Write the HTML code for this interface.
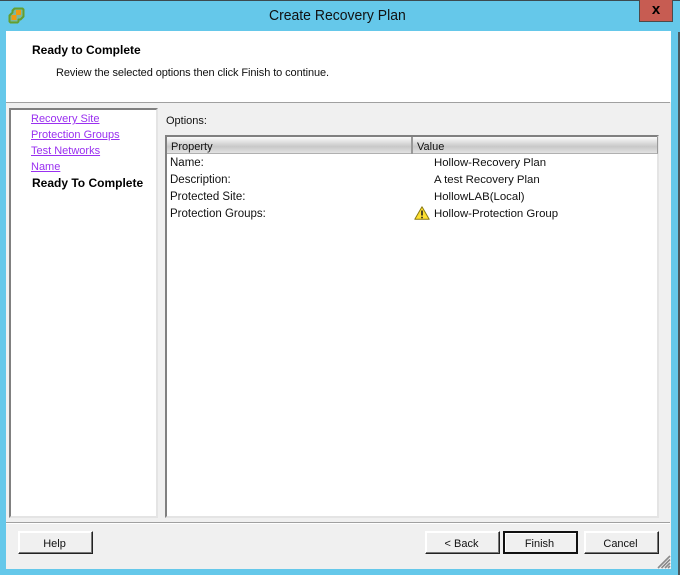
<!DOCTYPE html>
<html><head><meta charset="utf-8">
<style>
html,body{margin:0;padding:0;background:#65c8ea}
#w{position:relative;width:680px;height:575px;overflow:hidden;background:#65c8ea;font-family:"Liberation Sans",sans-serif;font-size:11px;color:#111}
#w div{position:absolute;box-sizing:border-box}
.t{white-space:nowrap;line-height:14px;height:14px}
a{color:#9a30f0;text-decoration:underline}
.btn{top:531px;height:23px;width:75px;background:#f0f0f0;border-top:1px solid #fff;border-left:1px solid #fff;border-right:1px solid #222;border-bottom:1px solid #222;box-shadow:inset -1px -1px 0 #777,inset 1px 1px 0 #fff;text-align:center;line-height:24px;padding-right:2px}
.l{font-size:11.5px}
.v{font-size:11.4px}
.b{font-size:12px;font-weight:bold;color:#000}
</style></head><body>
<div id="w">
<div style="left:0;top:0;width:680px;height:1px;background:#3c4a50"></div>
<div style="left:678px;top:32px;width:2px;height:543px;background:#4a5a60"></div>
<svg style="position:absolute;left:8px;top:7px" width="17" height="17" viewBox="0 0 17 17">
<path d="M6.500 1.500h8l1 1v7l-3 3h-2v2l-1 1h-7l-1-1v-6l3-3v-2z" fill="#7ab8a0" stroke="#649f2e" stroke-width="2" stroke-linejoin="round"/>
<rect x="8" y="3" width="5" height="5" fill="#f09a10"/>
<rect x="3.500" y="8" width="5" height="5" fill="#f09a10"/>
</svg>
<div class="t" style="left:269px;top:7px;font-size:15px;line-height:18px;height:18px;color:#111;transform:scaleX(.932);transform-origin:left">Create Recovery Plan</div>
<div style="left:639px;top:0;width:34px;height:22px;background:#c75c52;border:1px solid #4c4a4a;border-top:0;text-align:center;font-weight:bold;font-size:15px;line-height:19px;color:#000">x</div>

<div style="left:6px;top:31px;width:665px;height:71px;background:#fff"></div>
<div style="left:6px;top:102px;width:665px;height:467px;background:#f0f0f0"></div>
<div style="left:6px;top:102px;width:664px;height:1px;background:#a0a0a0"></div>

<div class="t b" style="left:32px;top:43px">Ready to Complete</div>
<div class="t" style="left:56px;top:66px;letter-spacing:-.09px">Review the selected options then click Finish to continue.</div>

<div style="left:9px;top:108px;width:149px;height:410px;background:#fff;border-top:2px solid #808080;border-left:2px solid #808080;border-right:2px solid #e4e4e4;border-bottom:2px solid #e4e4e4"></div>
<div class="t" style="left:31px;top:112px"><a>Recovery Site</a></div>
<div class="t" style="left:31px;top:128px"><a>Protection Groups</a></div>
<div class="t" style="left:31px;top:144px"><a>Test Networks</a></div>
<div class="t" style="left:31px;top:160px"><a>Name</a></div>
<div class="t b" style="left:32px;top:176px">Ready To Complete</div>

<div class="t" style="left:166px;top:114px">Options:</div>

<div style="left:165px;top:135px;width:494px;height:383px;background:#fff;border-top:2px solid #808080;border-left:2px solid #808080;border-right:2px solid #e4e4e4;border-bottom:2px solid #e4e4e4"></div>
<div style="left:167px;top:137px;width:491px;height:17px;background:linear-gradient(#fbfbfb,#c8c8c8 60%,#e2e2e2);border-bottom:1px solid #b0b0b0;border-right:1px solid #999"></div>
<div style="left:411px;top:137px;width:2px;height:17px;background:#999"></div>
<div class="t" style="left:171px;top:140px">Property</div>
<div class="t" style="left:417px;top:140px">Value</div>

<div class="t l" style="left:170px;top:156px">Name:</div>
<div class="t l" style="left:170px;top:173px">Description:</div>
<div class="t l" style="left:170px;top:190px">Protected Site:</div>
<div class="t l" style="left:170px;top:207px">Protection Groups:</div>
<div class="t v" style="left:434px;top:156px">Hollow-Recovery Plan</div>
<div class="t v" style="left:434px;top:173px">A test Recovery Plan</div>
<div class="t v" style="left:434px;top:190px">HollowLAB(Local)</div>
<div class="t v" style="left:434px;top:207px">Hollow-Protection Group</div>
<svg style="position:absolute;left:414px;top:206px" width="16" height="14" viewBox="0 0 16 14">
<path d="M8 .8 15.200 13.300H.8z" fill="#ffe030" stroke="#8a7a10" stroke-width="1" stroke-linejoin="round"/>
<path d="M8 4.500v5M8 10.800v1.400" stroke="#222" stroke-width="1.600"/>
</svg>

<div style="left:6px;top:522px;width:664px;height:1px;background:#a0a0a0"></div>
<div style="left:6px;top:523px;width:664px;height:1px;background:#fff"></div>

<div class="btn" style="left:18px">Help</div>
<div class="btn" style="left:425px">&lt; Back</div>
<div class="btn" style="left:503px;border:2px solid #111;box-shadow:inset 1px 1px 0 #fff;line-height:22px">Finish</div>
<div class="btn" style="left:584px">Cancel</div>

<svg style="position:absolute;left:657px;top:555px" width="14" height="14" viewBox="0 0 14 14">
<path d="M1 13 13 1M4.500 13 13 4.500M8 13 13 8M11 13 13 11" stroke="#8a8a8a" stroke-width="1.600" fill="none"/>
</svg>
</div>
</body></html>
